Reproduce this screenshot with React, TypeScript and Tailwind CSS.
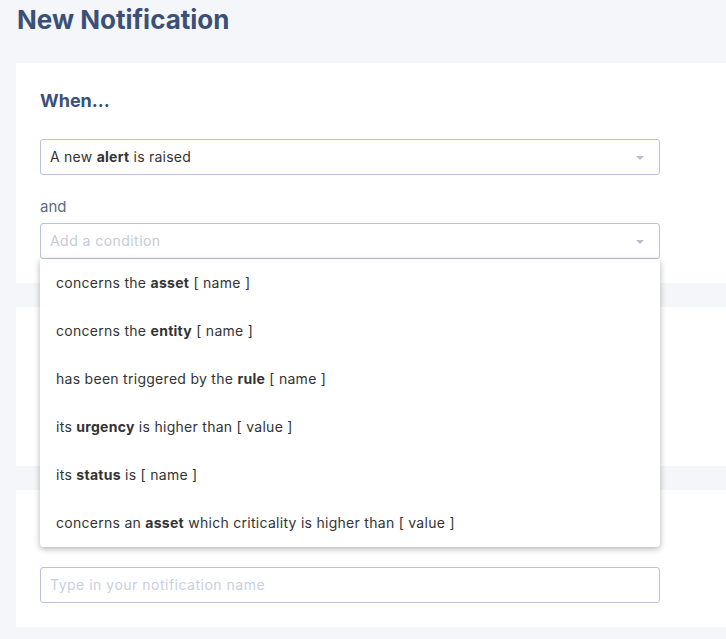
import React from "react";

const font = { fontFamily: "Inter, 'Noto Sans', sans-serif" };

function Caret() {
  return (
    <svg width="8" height="4" viewBox="0 0 8 4" className="shrink-0 mt-px">
      <path d="M0 0 H8 L4 4 Z" fill="#b6bfd6" />
    </svg>
  );
}

const items: React.ReactNode[] = [
  <>concerns the <b className="font-bold">asset</b> [ name ]</>,
  <>concerns the <b className="font-bold">entity</b> [ name ]</>,
  <>has been triggered by the <b className="font-bold">rule</b> [ name ]</>,
  <>its <b className="font-bold">urgency</b> is higher than [ value ]</>,
  <>its <b className="font-bold">status</b> is [ name ]</>,
  <>concerns an <b className="font-bold">asset</b> which criticality is higher than [ value ]</>,
];

export default function App() {
  return (
    <div className="min-h-[639px] w-[726px] overflow-hidden bg-[#f5f6fa]" style={font}>
      <h1 className="pl-[17px] pt-[4px] h-[63px] text-[26px] font-bold text-[#3a5078] leading-[32px]">
        New Notification
      </h1>
      <div className="ml-4 flex flex-col gap-6">
        <section className="bg-white h-[220px] px-6 pt-[26px] relative">
          <h2 className="text-[18px] font-bold text-[#3a5078] leading-6 h-[50px]">When...</h2>
          <div className="w-[620px] h-9 border border-[#b8c4dc] rounded-[3px] flex items-center justify-between pl-[9px] pr-[15px] text-[14px] tracking-[0.25px] text-[#333]">
            <span className="-mt-px">A new <b className="font-bold">alert</b> is raised</span>
            <Caret />
          </div>
          <div className="mt-[22px] text-[15px] text-[#5b6b86] leading-5 h-[26px]">and</div>
          <div className="w-[620px] h-9 border border-[#b8c4dc] rounded-[3px] flex items-center justify-between pl-[9px] pr-[15px] text-[14px] tracking-[0.45px] text-[#c3cbdd]">
            <span className="-mt-px">Add a condition</span>
            <Caret />
          </div>
          <ul className="absolute left-6 top-[196px] z-10 w-[620px] bg-white rounded-b-[4px] shadow-[0_2px_6px_rgba(0,0,0,0.3)]">
            {items.map((it, i) => (
              <li key={i} className="h-12 flex items-center px-4 text-[14px] tracking-[0.28px] text-[#333]">
                <span className="-mt-0.5">{it}</span>
              </li>
            ))}
          </ul>
        </section>
        <section className="bg-white h-[159px]" />
        <section className="bg-white h-[137px] px-6 pt-[77px]">
          <div className="w-[620px] h-9 border border-[#b8c4dc] rounded-[3px] flex items-center pl-[9px] text-[14px] tracking-[0.5px] text-[#c8d0e0]">
            <span className="-mt-px">Type in your notification name</span>
          </div>
        </section>
      </div>
    </div>
  );
}
